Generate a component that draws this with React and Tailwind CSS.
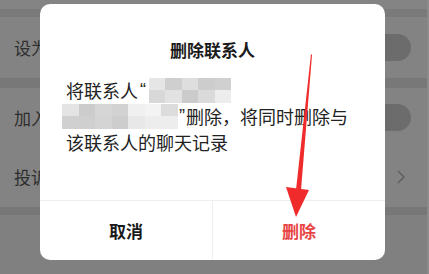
import React from "react";

const font = { fontFamily: '"Noto Sans CJK SC", "Noto Sans", sans-serif' };
const latin = { fontFamily: '"Liberation Sans", sans-serif' };

function Mosaic({ cols, cells, w }) {
  return (
    <span
      className="inline-grid align-middle h-[25px] overflow-hidden blur-[0.6px]"
      style={{ width: w, gridTemplateColumns: `repeat(${cols}, 1fr)` }}
    >
      {cells.map((c, i) => (
        <span key={i} style={{ background: c }} />
      ))}
    </span>
  );
}

export default function App() {
  const m1 = ["#e6e6e6", "#cfcfcf", "#dedede", "#cdcdcd", "#d0d0d0", "#d8d8d8", "#e2e2e2", "#cbcbcb", "#dadada", "#ededed"];
  const m2 = ["#e4e4e4", "#cccccc", "#d6d6d6", "#d2d2d2", "#f0f0f0", "#f3f3f3", "#dcdcdc", "#d0d0d0", "#cfcfcf", "#d4d4d4", "#cdcdcd", "#e8e8e8", "#ededed", "#ededed"];
  return (
    <div className="relative w-[429px] h-[274px] overflow-hidden bg-[#808080] flex flex-col border-r-2 border-[#8b8b8b]" style={font}>
      <div className="h-[9px] bg-[#848484]" />
      <div className="h-[8px] bg-[#7a7a7a]" />
      <div className="h-[61px] bg-[#838383] flex items-center justify-between pl-[14px] pr-[16px]">
        <span className="text-[17px] text-[#2e2e2e]">设为星标朋友</span>
        <span className="w-[52px] h-[27px] rounded-full bg-[#6c6c6c]" />
      </div>
      <div className="h-[10px] bg-[#787878]" />
      <div className="h-[59px] bg-[#838383] flex items-center justify-between pl-[14px] pr-[16px]">
        <span className="text-[17px] text-[#2e2e2e]">加入黑名单</span>
        <span className="w-[52px] h-[27px] rounded-full bg-[#6c6c6c]" />
      </div>
      <div className="h-[60px] bg-[#838383] flex items-center justify-between pl-[14px] pr-[22px]">
        <span className="text-[17px] text-[#2e2e2e]">投诉</span>
        <svg width="8" height="14" viewBox="0 0 8 14">
          <path d="M1 1 L7 7 L1 13" fill="none" stroke="#5e5e5e" strokeWidth="1.5" />
        </svg>
      </div>
      <div className="h-[8px] bg-[#777777]" />
      <div className="flex-1 bg-[#808080]" />

      <div className="absolute left-[40px] top-[4px] w-[345px] h-[256px] bg-white rounded-[10px] flex flex-col">
        <div className="pt-[33px] text-center text-[17px] leading-[26px] font-bold text-[#1a1a1a]">删除联系人</div>
        <div className="mt-[14px] px-[26px] text-[18px] leading-[26px] text-[#222]">
          <div className="flex items-center h-[26px]">
            <span>将联系人</span>
            <span className="ml-[2px]" style={latin}>“</span>
            <span className="ml-[3px] flex"><Mosaic cols={5} cells={m1} w={82} /></span>
          </div>
          <div className="flex items-center h-[26px] -ml-[4px]">
            <Mosaic cols={7} cells={m2} w={116} />
            <span className="ml-[1px]" style={latin}>”</span>
            <span className="ml-[1px]">删除，将同时删除与</span>
          </div>
          <div className="h-[26px]">该联系人的聊天记录</div>
        </div>
        <div className="flex-1" />
        <div className="h-[60px] border-t border-[#efefef] flex">
          <div className="flex-1 flex items-center justify-center text-[17px] font-bold text-[#1a1a1a]">取消</div>
          <div className="w-px bg-[#efefef]" />
          <div className="flex-1 flex items-center justify-center text-[17px] font-bold text-[#e84444]">删除</div>
        </div>
      </div>

      <svg className="absolute left-0 top-0" width="429" height="274" viewBox="0 0 429 274">
        <polygon points="311,54 312,55 301,190 296,190" fill="#ef2b2b" />
        <polygon points="286,187 309,190 296,217" fill="#ef2b2b" />
      </svg>
    </div>
  );
}
